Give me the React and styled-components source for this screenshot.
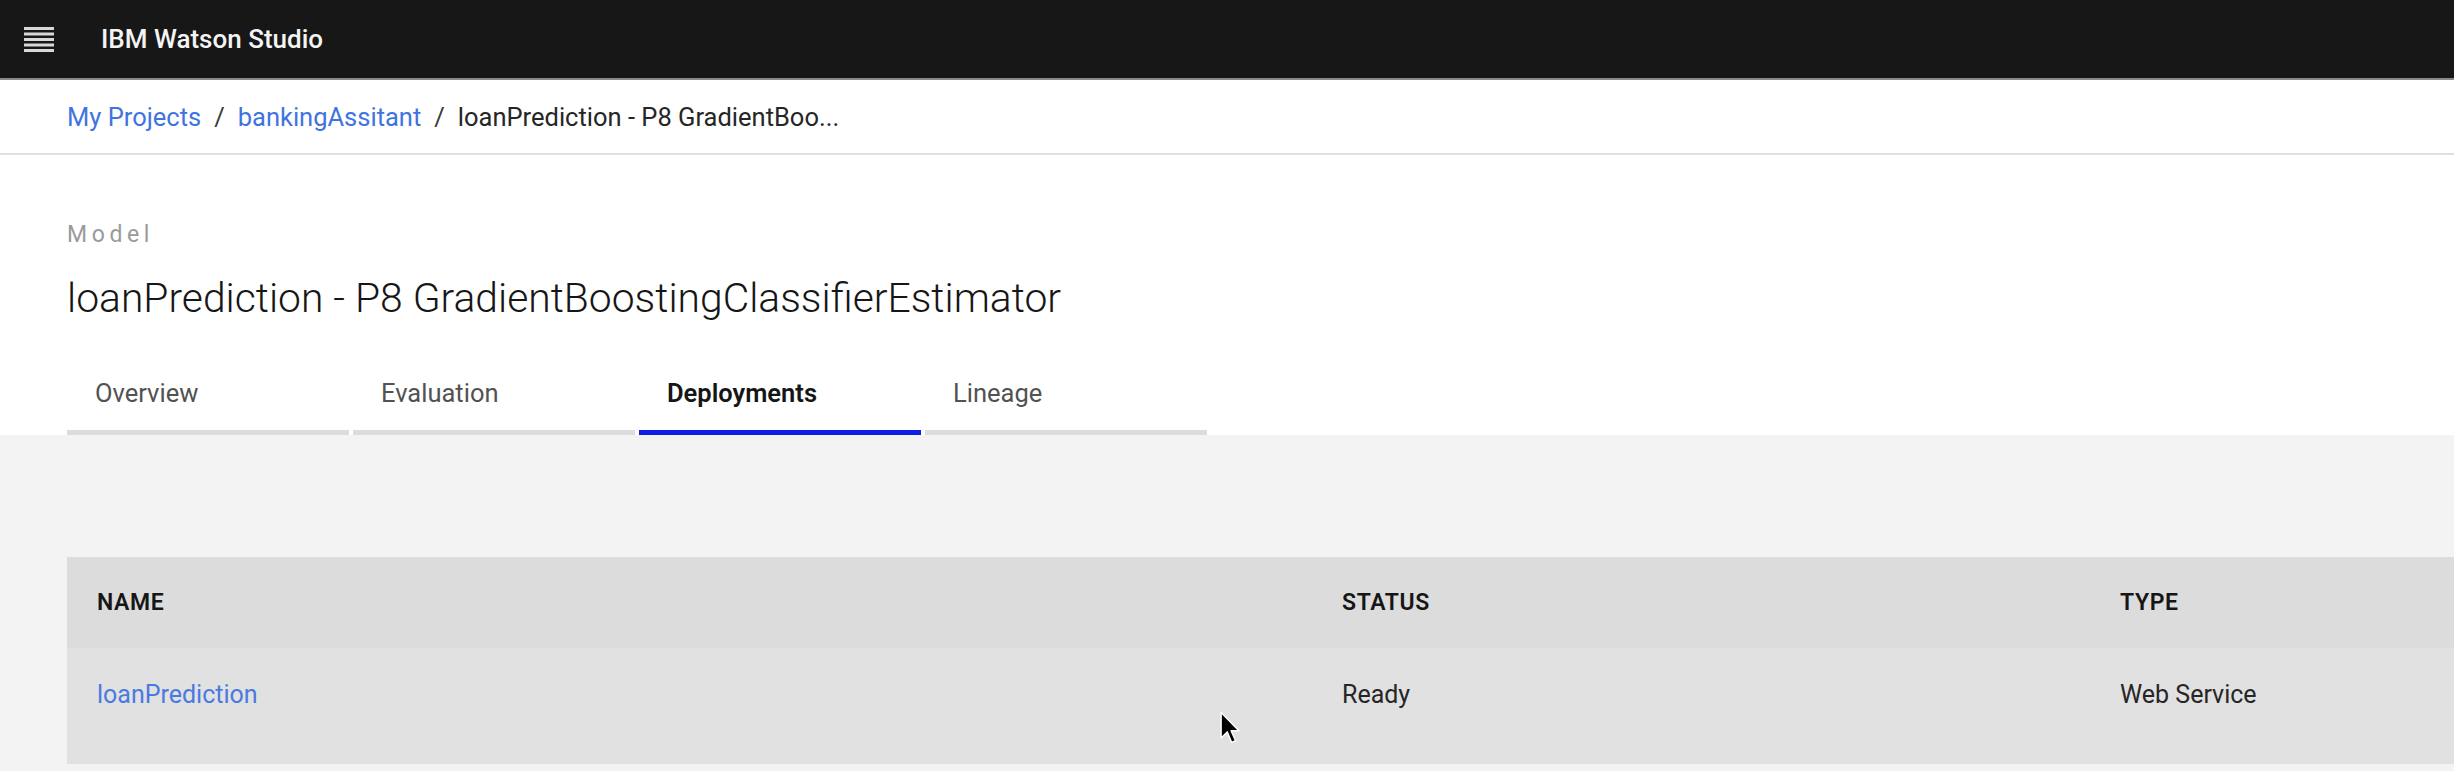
import React from 'react'
import styled, { createGlobalStyle } from 'styled-components'

const GlobalStyle = createGlobalStyle`
  html, body {
    margin: 0;
    padding: 0;
    background: #f3f3f3;
    font-family: Roboto, "Liberation Sans", Arial, sans-serif;
    color: #161616;
  }
  * { box-sizing: border-box; }
`

const tabs = ['Overview', 'Evaluation', 'Deployments', 'Lineage']

const deployments = [
   { name: 'loanPrediction', status: 'Ready', type: 'Web Service' }
]

const MenuIcon = () => (
   <svg width="30" height="25" viewBox="0 0 30 25">
      {[0, 5.5, 11, 16.5, 22].map(y => (
         <rect key={y} x="0" y={y} width="30" height="3" fill="#d8d8d8" />
      ))}
   </svg>
)

const Cursor = () => (
   <svg width="20" height="34" viewBox="0 0 18 30">
      <path d="M1 1 L1 24 L6.5 18.5 L10.5 28 L14 26.5 L10 17.5 L17 17.5 Z"
         fill="#000" stroke="#fff" strokeWidth="1.3" strokeLinejoin="round" />
   </svg>
)

const App = () => {
   return (
      <Page>
         <GlobalStyle />
         <Header>
            <MenuButton><MenuIcon /></MenuButton>
            <Brand>IBM Watson Studio</Brand>
         </Header>

         <Breadcrumbs>
            <Crumb href="#">My Projects</Crumb>
            <Slash>/</Slash>
            <Crumb href="#">bankingAssitant</Crumb>
            <Slash>/</Slash>
            <Current>loanPrediction - P8 GradientBoo...</Current>
         </Breadcrumbs>

         <Intro>
            <Eyebrow>Model</Eyebrow>
            <Title>loanPrediction - P8 GradientBoostingClassifierEstimator</Title>
            <TabList>
               {tabs.map(t => (
                  <Tab key={t} active={t === 'Deployments'}>{t}</Tab>
               ))}
            </TabList>
         </Intro>

         <Body>
            <Table>
               <HeadRow>
                  <HeadCell>NAME</HeadCell>
                  <HeadCell>STATUS</HeadCell>
                  <HeadCell>TYPE</HeadCell>
               </HeadRow>
               {deployments.map(d => (
                  <Row key={d.name}>
                     <Cell><RowLink href="#">{d.name}</RowLink></Cell>
                     <Cell>{d.status}</Cell>
                     <Cell>{d.type}</Cell>
                  </Row>
               ))}
            </Table>
         </Body>

         <Pointer><Cursor /></Pointer>
      </Page>
   )
}

export default App


//CSS IN JS
const Page = styled.div`
   position: relative;
   min-height: 771px;
   background: #f3f3f3;
   overflow: hidden;
`

const Header = styled.header`
   height: 80px;
   background: #171717;
   border-bottom: 2px solid #8a8a8a;
   display: flex;
   align-items: center;
   padding-left: 24px;
`

const MenuButton = styled.div`
   display: flex;
   width: 30px;
   height: 25px;
   margin-right: 47px;
`

const Brand = styled.span`
   color: #f4f4f4;
   font-size: 26px;
   font-weight: 500;
`

const Breadcrumbs = styled.nav`
   height: 75px;
   background: #fff;
   border-bottom: 2px solid #e0e0e0;
   display: flex;
   align-items: center;
   padding-left: 67px;
   font-size: 25.5px;
`

const Crumb = styled.a`
   color: #3f74e0;
   text-decoration: none;
`

const Slash = styled.span`
   color: #393939;
   margin: 0 13px;
`

const Current = styled.span`
   color: #262626;
`

const Intro = styled.section`
   background: #fff;
   padding: 66px 0 0 67px;
`

const Eyebrow = styled.div`
   font-size: 23px;
   line-height: 28px;
   letter-spacing: 4.6px;
   color: #9a9a9a;
`

const Title = styled.h1`
   margin: 25px 0 0;
   font-size: 40.8px;
   line-height: 48px;
   font-weight: 300;
   color: #161616;
`

const TabList = styled.div`
   display: flex;
   gap: 4px;
   margin-top: 56px;
`

const Tab = styled.div`
   width: 282px;
   padding: 0 0 22px 28px;
   font-size: 25.5px;
   line-height: 30px;
   font-weight: ${p => (p.active ? 600 : 400)};
   color: ${p => (p.active ? '#161616' : '#525252')};
   border-bottom: 5px solid ${p => (p.active ? '#0f1ee6' : '#dcdcdc')};
`

const Body = styled.main`
   padding: 122px 0 0 67px;
`

const Table = styled.div`
   display: flex;
   flex-direction: column;
`

const HeadRow = styled.div`
   display: grid;
   grid-template-columns: 1245px 778px 1fr;
   height: 91px;
   align-items: center;
   background: #dcdcdc;
`

const HeadCell = styled.div`
   padding-left: 30px;
   font-size: 23px;
   font-weight: 600;
   letter-spacing: 0.6px;
   color: #161616;
`

const Row = styled.div`
   display: grid;
   grid-template-columns: 1245px 778px 1fr;
   height: 116px;
   align-items: start;
   padding-top: 32px;
   background: #e1e1e1;
`

const Cell = styled.div`
   padding-left: 30px;
   font-size: 25px;
   color: #262626;
`

const RowLink = styled.a`
   color: #4a7ae0;
   text-decoration: none;
`

const Pointer = styled.div`
   position: absolute;
   left: 1220px;
   top: 711px;
   display: flex;
`
